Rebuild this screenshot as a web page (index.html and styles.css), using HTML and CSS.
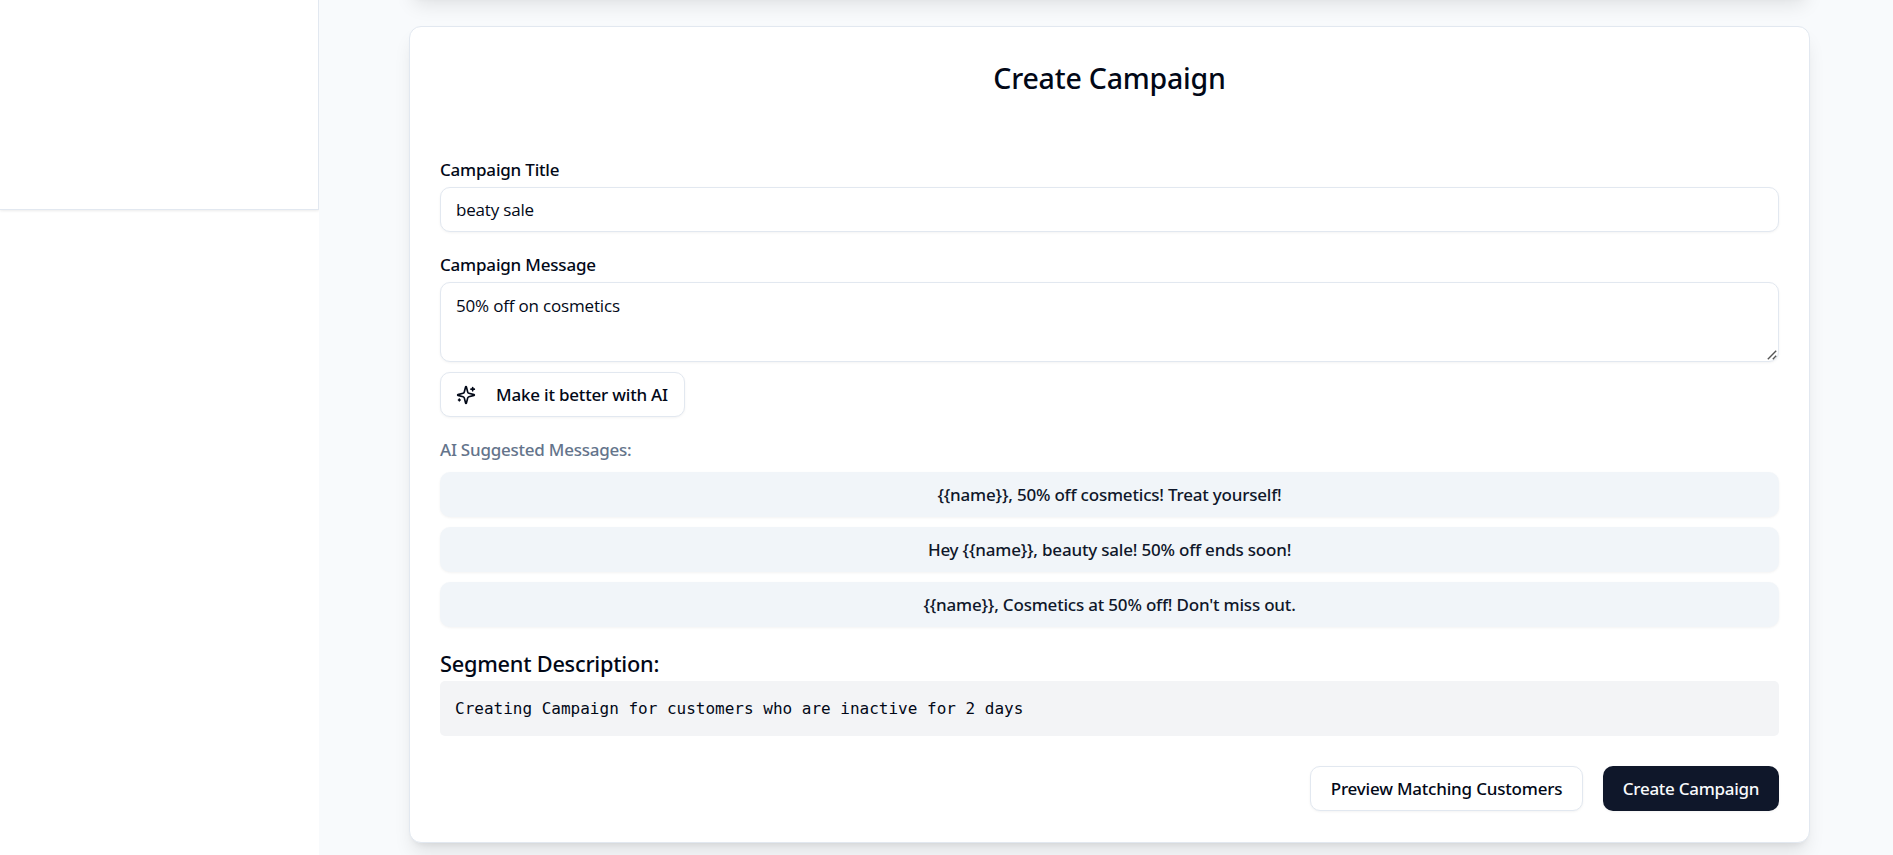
FILE: index.html
```
<!DOCTYPE html>
<html lang="en">
<head>
    <meta charset="UTF-8">
    <meta name="viewport" content="width=device-width, initial-scale=1.0">
    <title>Create Campaign</title>
    <link rel="stylesheet" href="styles.css">
</head>
<body>
    <aside class="sidebar"></aside>

    <main class="content">
        <section class="card card-previous"></section>

        <section class="card">
            <h2 class="card-title">Create Campaign</h2>

            <form class="campaign-form">
                <label class="label" for="title">Campaign Title</label>
                <input class="field" type="text" id="title" value="beaty sale">

                <label class="label label-message" for="message">Campaign Message</label>
                <div class="message-box">
                    <textarea class="field" id="message">50% off on cosmetics</textarea>
                    <svg class="grip" viewBox="0 0 10 10" fill="none" stroke="#555" stroke-width="1.4">
                        <path d="M0.8 9.2 9.2 0.8M5.8 9.2 9.2 5.8"/>
                    </svg>
                </div>

                <button type="button" class="btn btn-outline btn-ai">
                    <svg class="sparkles" viewBox="0 0 24 24" fill="none" stroke="currentColor" stroke-width="2" stroke-linecap="round" stroke-linejoin="round">
                        <path d="M9.937 15.5A2 2 0 0 0 8.5 14.063l-6.135-1.582a.5.5 0 0 1 0-.962L8.5 9.936A2 2 0 0 0 9.937 8.5l1.582-6.135a.5.5 0 0 1 .963 0L14.063 8.5A2 2 0 0 0 15.5 9.937l6.135 1.581a.5.5 0 0 1 0 .964L15.5 14.063a2 2 0 0 0-1.437 1.437l-1.582 6.135a.5.5 0 0 1-.963 0z"/>
                        <path d="M20 3v4M22 5h-4M4 17v2M5 18H3"/>
                    </svg>
                    Make it better with AI
                </button>

                <p class="hint">AI Suggested Messages:</p>
                <div class="suggestions">
                    <button type="button" class="btn btn-secondary">{{name}}, 50% off cosmetics! Treat yourself!</button>
                    <button type="button" class="btn btn-secondary">Hey {{name}}, beauty sale! 50% off ends soon!</button>
                    <button type="button" class="btn btn-secondary">{{name}}, Cosmetics at 50% off! Don't miss out.</button>
                </div>

                <h3 class="segment-title">Segment Description:</h3>
                <pre class="segment">Creating Campaign for customers who are inactive for 2 days</pre>

                <div class="actions">
                    <button type="button" class="btn btn-outline btn-preview">Preview Matching Customers</button>
                    <button type="submit" class="btn btn-primary">Create Campaign</button>
                </div>
            </form>
        </section>
    </main>
</body>
</html>
```
FILE: styles.css
```
* {
    box-sizing: border-box;
}

body {
    margin: 0;
    height: 855px;
    display: flex;
    overflow: hidden;
    background-color: #fff;
    color: #020817;
    font-family: "Noto Sans", "Open Sans", sans-serif;
    font-size: 17px;
}

.sidebar {
    width: 319px;
    height: 210px;
    flex-shrink: 0;
    background-color: #fff;
    border-right: 1px solid #e2e8f0;
    border-bottom: 1px solid #e2e8f0;
    box-shadow: 0 1px 2.5px rgba(0, 0, 0, 0.08);
}

.content {
    position: relative;
    flex: 1;
    height: 855px;
    padding: 0 83px 0 90px;
    overflow: hidden;
    background-color: #f8fafc;
}

.card {
    height: 817px;
    padding: 0 30px;
    background-color: #fff;
    border: 1px solid #e2e8f0;
    border-radius: 12px;
    box-shadow: 0 12.5px 19px -4px rgba(0, 0, 0, 0.1), 0 5px 7.5px -5px rgba(0, 0, 0, 0.1);
}

.card-previous {
    height: 60px;
    margin: -64px 0 30px;
}

.card-title {
    margin: 0;
    padding-top: 29px;
    font-size: 28.5px;
    line-height: 45px;
    font-weight: 500;
    letter-spacing: -0.2px;
    text-align: center;
}

.campaign-form {
    display: flex;
    flex-direction: column;
    padding-top: 57px;
}

.label {
    height: 29px;
    line-height: 24px;
    font-weight: 500;
    letter-spacing: -0.2px;
}

.label-message {
    margin-top: 21px;
}

.field {
    display: block;
    width: 100%;
    height: 45px;
    padding: 0 15px;
    border: 1px solid #e2e8f0;
    border-radius: 10px;
    background-color: #fff;
    color: #020817;
    font-family: "Open Sans", sans-serif;
    font-size: 17px;
    letter-spacing: -0.18px;
    box-shadow: 0 1px 2.5px rgba(0, 0, 0, 0.05);
    outline: none;
}

.message-box {
    position: relative;
}

.message-box .field {
    height: 80px;
    padding: 10px 15px;
    line-height: 25px;
    resize: none;
}

.grip {
    position: absolute;
    right: 2px;
    bottom: 2px;
    width: 10px;
    height: 10px;
}

.btn {
    display: flex;
    align-items: center;
    justify-content: center;
    height: 45px;
    padding: 0 20px;
    border: none;
    border-radius: 10px;
    color: #020817;
    font-family: inherit;
    font-size: 17px;
    font-weight: 500;
    letter-spacing: -0.2px;
    white-space: nowrap;
    box-shadow: 0 1px 2.5px rgba(0, 0, 0, 0.05);
    cursor: pointer;
}

.btn-outline {
    background-color: #fff;
    border: 1px solid #e2e8f0;
}

.btn-ai {
    width: 245px;
    margin-top: 10px;
    padding: 0 15px;
    justify-content: flex-start;
    gap: 20px;
}

.sparkles {
    width: 20px;
    height: 20px;
    flex-shrink: 0;
}

.hint {
    margin: 20px 0 9px;
    line-height: 26px;
    color: #64748b;
    font-weight: 500;
    letter-spacing: -0.24px;
}

.suggestions {
    display: flex;
    flex-direction: column;
    gap: 10px;
}

.btn-secondary {
    background-color: #f1f5f9;
    color: #0f172a;
}

.segment-title {
    margin: 20px 0 0;
    font-size: 21.75px;
    line-height: 34px;
    font-weight: 500;
    letter-spacing: -0.24px;
}

.segment {
    height: 55px;
    margin: 0;
    padding: 15px;
    border-radius: 5px;
    background-color: #f3f4f6;
    font-family: "DejaVu Sans Mono", monospace;
    font-size: 16px;
    line-height: 25px;
}

.actions {
    display: flex;
    justify-content: flex-end;
    gap: 20px;
    margin-top: 30px;
}

.btn-preview {
    width: 273px;
}

.btn-primary {
    width: 176px;
    background-color: #0f172a;
    color: #f8fafc;
    letter-spacing: -0.28px;
}
```
